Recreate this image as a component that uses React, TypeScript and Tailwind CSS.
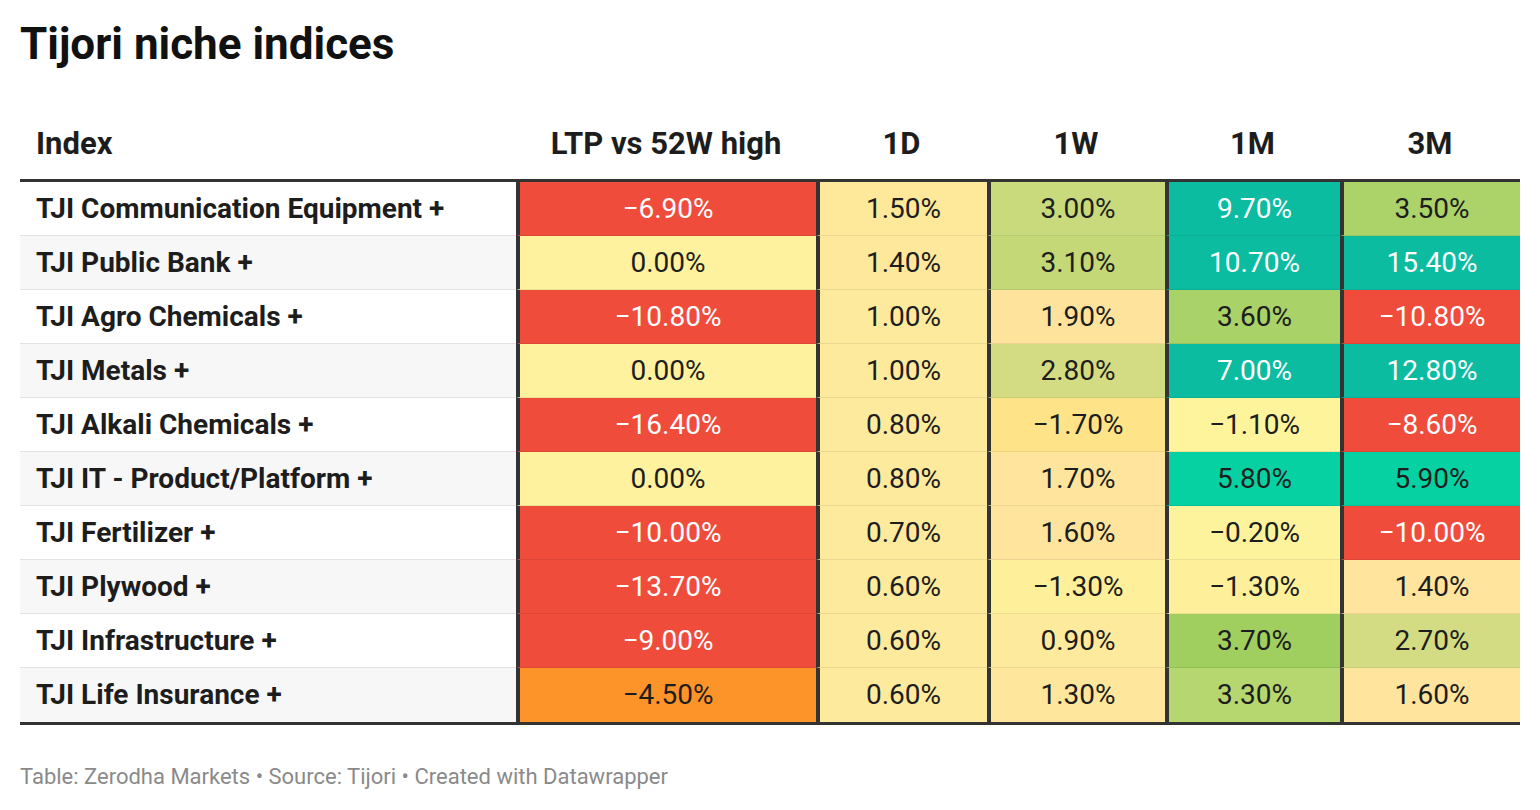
import React from "react";

type Cell = { v: string; bg: string; light?: boolean };
type Row = { name: string; cells: Cell[] };

const RED = "bg-[#f04c3c]";
const TEAL = "bg-[#0bbca0]";

const rows: Row[] = [
  {
    name: "TJI Communication Equipment +",
    cells: [
      { v: "−6.90%", bg: RED, light: true },
      { v: "1.50%", bg: "bg-[#fee99b]" },
      { v: "3.00%", bg: "bg-[#c8da7b]" },
      { v: "9.70%", bg: TEAL, light: true },
      { v: "3.50%", bg: "bg-[#acd36a]" },
    ],
  },
  {
    name: "TJI Public Bank +",
    cells: [
      { v: "0.00%", bg: "bg-[#fef29f]" },
      { v: "1.40%", bg: "bg-[#fee89c]" },
      { v: "3.10%", bg: "bg-[#c4d878]" },
      { v: "10.70%", bg: TEAL, light: true },
      { v: "15.40%", bg: TEAL, light: true },
    ],
  },
  {
    name: "TJI Agro Chemicals +",
    cells: [
      { v: "−10.80%", bg: RED, light: true },
      { v: "1.00%", bg: "bg-[#feea9c]" },
      { v: "1.90%", bg: "bg-[#fee39c]" },
      { v: "3.60%", bg: "bg-[#a9d268]" },
      { v: "−10.80%", bg: RED, light: true },
    ],
  },
  {
    name: "TJI Metals +",
    cells: [
      { v: "0.00%", bg: "bg-[#fef29f]" },
      { v: "1.00%", bg: "bg-[#feea9c]" },
      { v: "2.80%", bg: "bg-[#d3dc82]" },
      { v: "7.00%", bg: TEAL, light: true },
      { v: "12.80%", bg: TEAL, light: true },
    ],
  },
  {
    name: "TJI Alkali Chemicals +",
    cells: [
      { v: "−16.40%", bg: RED, light: true },
      { v: "0.80%", bg: "bg-[#feea9c]" },
      { v: "−1.70%", bg: "bg-[#fee388]" },
      { v: "−1.10%", bg: "bg-[#fef49c]" },
      { v: "−8.60%", bg: RED, light: true },
    ],
  },
  {
    name: "TJI IT - Product/Platform +",
    cells: [
      { v: "0.00%", bg: "bg-[#fef29f]" },
      { v: "0.80%", bg: "bg-[#feea9c]" },
      { v: "1.70%", bg: "bg-[#fee49c]" },
      { v: "5.80%", bg: "bg-[#05d1a3]" },
      { v: "5.90%", bg: "bg-[#05d1a3]" },
    ],
  },
  {
    name: "TJI Fertilizer +",
    cells: [
      { v: "−10.00%", bg: RED, light: true },
      { v: "0.70%", bg: "bg-[#feea9c]" },
      { v: "1.60%", bg: "bg-[#fee49c]" },
      { v: "−0.20%", bg: "bg-[#fef39d]" },
      { v: "−10.00%", bg: RED, light: true },
    ],
  },
  {
    name: "TJI Plywood +",
    cells: [
      { v: "−13.70%", bg: RED, light: true },
      { v: "0.60%", bg: "bg-[#feea9c]" },
      { v: "−1.30%", bg: "bg-[#fef09a]" },
      { v: "−1.30%", bg: "bg-[#fef09a]" },
      { v: "1.40%", bg: "bg-[#fee49c]" },
    ],
  },
  {
    name: "TJI Infrastructure +",
    cells: [
      { v: "−9.00%", bg: RED, light: true },
      { v: "0.60%", bg: "bg-[#feea9c]" },
      { v: "0.90%", bg: "bg-[#feea9c]" },
      { v: "3.70%", bg: "bg-[#a0ce5f]" },
      { v: "2.70%", bg: "bg-[#d3dc82]" },
    ],
  },
  {
    name: "TJI Life Insurance +",
    cells: [
      { v: "−4.50%", bg: "bg-[#fd9429]" },
      { v: "0.60%", bg: "bg-[#feea9c]" },
      { v: "1.30%", bg: "bg-[#fee79c]" },
      { v: "3.30%", bg: "bg-[#b6d66f]" },
      { v: "1.60%", bg: "bg-[#fee49c]" },
    ],
  },
];

const headers = ["LTP vs 52W high", "1D", "1W", "1M", "3M"];
const GRID = "grid grid-cols-[496px_300px_171px_178px_175px_180px]";

export default function App() {
  return (
    <div className="w-[1540px] h-[810px] bg-white font-['Roboto',sans-serif] text-[#1d1d1d] px-[20px]">
      <h1 className="pt-[18px] text-[44px] leading-[52px] font-bold text-[#111]">
        Tijori niche indices
      </h1>
      <div className={`${GRID} h-[109px] items-end pb-[17px] text-[31px] leading-[36px] font-bold`}>
        <div className="pl-[16px]">Index</div>
        {headers.map((h) => (
          <div key={h} className="text-center">
            {h}
          </div>
        ))}
      </div>
      <div className="border-t-[3px] border-b-[3px] border-[#333]">
        {rows.map((r, i) => (
          <div key={r.name} className={`${GRID} h-[54px]`}>
            <div
              className={`flex items-center pl-[16px] text-[28px] font-bold ${
                i % 2 === 1 ? "bg-[#f7f7f7]" : "bg-white"
              } ${i < rows.length - 1 ? "border-b border-[#e3e3e3]" : ""}`}
            >
              {r.name}
            </div>
            {r.cells.map((c, j) => (
              <div
                key={j}
                className={`border-l-[4px] border-l-[#333] ${c.bg} ${
                  i < rows.length - 1 ? "border-b border-b-black/[0.07]" : ""
                } flex items-center justify-center text-[28px] ${
                  c.light ? "text-white" : "text-[#1d1d1d]"
                }`}
              >
                {c.v}
              </div>
            ))}
          </div>
        ))}
      </div>
      <div className="pt-[39px] text-[22px] leading-[26px] text-[#8a8a8a]">
        Table: Zerodha Markets • Source: Tijori • Created with Datawrapper
      </div>
    </div>
  );
}
